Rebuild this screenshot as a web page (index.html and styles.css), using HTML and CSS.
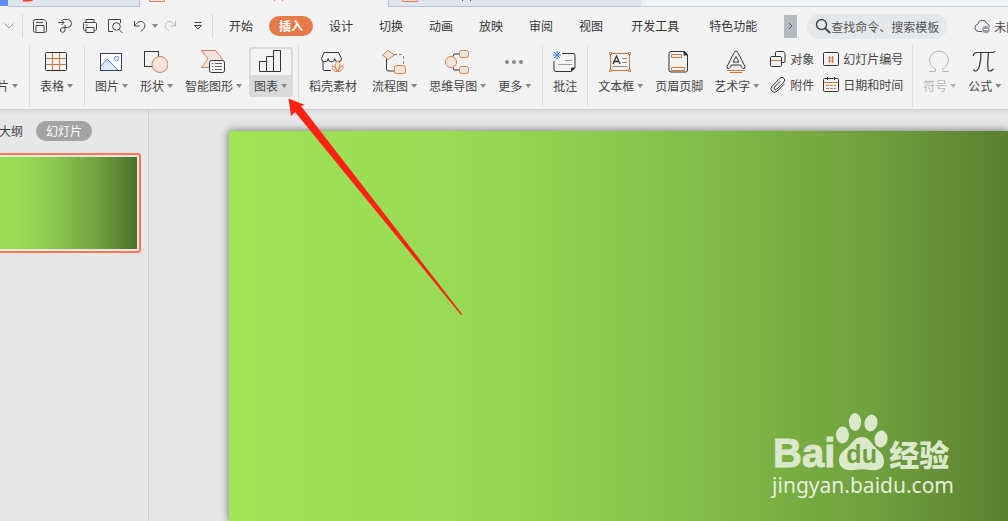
FILE: index.html
```html
<!DOCTYPE html>
<html lang="zh-CN">
<head>
    <meta charset="UTF-8">
    <meta name="viewport" content="width=device-width, initial-scale=1.0">
    <title>演示文稿 - 插入</title>
    <link rel="stylesheet" href="styles.css">
</head>
<body>
    <div class="app">
        <div class="doc-tabs">
            <div class="doc-home"></div>
            <div class="doc-tab">
                <svg width="12" height="6" viewBox="0 0 12 6"><path d="M1 0h10q0 1-4 1.500H1z" fill="#ff3c14"/></svg>
            </div>
            <div class="doc-tab active">
                <svg width="140" height="7" viewBox="0 0 140 7"><path d="M.5 0v1.500h15V0" fill="none" stroke="#f07846"/><path d="M125 0h1v1h-1zM133 0h1v1h-1z" fill="#f07846"/></svg>
            </div>
            <div class="doc-tab last">
                <svg width="140" height="7" viewBox="0 0 140 7"><path d="M.5 0v1.500h15V0" fill="none" stroke="#f07846"/><path d="M60 0h1v1h-1zM68 0h1v1h-1z" fill="#555"/></svg>
            </div>
            <div class="doc-rest"></div>
        </div>

        <div class="menu-bar">
            <div class="file-end">
                <svg width="10" height="6" viewBox="0 0 10 6"><path d="M.5.500l4.500 4.500L9.500.500" fill="none" stroke="#999"/></svg>
            </div>
            <div class="quick-bar">
                <button class="quick" aria-label="保存">
                    <svg width="16" height="16" viewBox="0 0 16 16"><path d="M3 1.500h9l2.500 2.500v8.500a2 2 0 0 1-2 2h-9a2 2 0 0 1-2-2v-9a2 2 0 0 1 2-2M4 4.500h7M4 14V7.500h8V14"/></svg>
                </button>
                <button class="quick" aria-label="输出为PDF">
                    <svg width="16" height="16" viewBox="0 0 16 16"><path d="M1 4.500h6M4.500 2l2.500 2.500L4.500 7M6 1.500h4.500a4 4 0 0 1 0 8H8M8 7v5a2.300 2.300 0 1 1-2.300-2.300H8"/></svg>
                </button>
                <button class="quick" aria-label="打印">
                    <svg width="16" height="16" viewBox="0 0 16 16"><path d="M4 4.500v-3h8v3M4 12.500H2.500a1 1 0 0 1-1-1v-6a1 1 0 0 1 1-1h11a1 1 0 0 1 1 1v6a1 1 0 0 1-1 1H12M4 9.500h8v5H4zM3.500 7h2"/></svg>
                </button>
                <button class="quick" aria-label="打印预览">
                    <svg width="16" height="16" viewBox="0 0 16 16"><path d="M6 13.500H1.500v-12h12V5"/><circle cx="9.500" cy="8.500" r="3.800"/><path d="M12 11.500l3.500 3.500"/></svg>
                </button>
                <button class="quick" aria-label="撤销">
                    <svg width="16" height="16" viewBox="0 0 16 16"><path d="M2.500 3v5h5M2.500 8C5 4 9 2 11.500 4.500s1.500 6-3 9"/></svg>
                </button>
                <span class="caret"></span>
                <button class="quick off" aria-label="恢复">
                    <svg width="16" height="16" viewBox="0 0 16 16"><path d="M13.500 3v5h-5M13.500 8C11 4 7 2 4.500 4.500s-1.500 6 2.500 8.500"/></svg>
                </button>
                <button class="quick more" aria-label="自定义快速访问">
                    <svg width="10" height="8" viewBox="0 0 10 8"><path d="M1.500.500h7M1.500 3.500L5 7l3.500-3.500z"/></svg>
                </button>
            </div>
            <nav class="tabs">
                <button class="tab">开始</button>
                <button class="tab active">插入</button>
                <button class="tab">设计</button>
                <button class="tab">切换</button>
                <button class="tab">动画</button>
                <button class="tab">放映</button>
                <button class="tab">审阅</button>
                <button class="tab">视图</button>
                <button class="tab wide">开发工具</button>
                <button class="tab wide">特色功能</button>
            </nav>
            <button class="tabs-next" aria-label="更多选项卡">
                <svg width="5" height="8" viewBox="0 0 5 8"><path d="M1 1l3 3-3 3" fill="none" stroke="#555"/></svg>
            </button>
            <label class="search">
                <svg width="16" height="16" viewBox="0 0 16 16"><circle cx="6.500" cy="6.500" r="5" fill="none" stroke="#444" stroke-width="1.400"/><path d="M10 10l5 5" stroke="#444" stroke-width="1.800"/></svg>
                <input type="text" placeholder="查找命令、搜索模板" aria-label="查找命令、搜索模板">
            </label>
            <button class="sync">
                <svg width="17" height="16" viewBox="0 0 17 16"><path d="M8 13.500H4.500a3.800 3.800 0 0 1-.500-7.500 4.500 4.500 0 0 1 8.800-.500 3.500 3.500 0 0 1 2.700 3" fill="none" stroke="#555"/><circle cx="12" cy="11.500" r="3.800" fill="#989eae"/><path d="M10 11.500h4" stroke="#fff"/></svg>
                <span>未同步</span>
            </button>
        </div>

        <div class="ribbon">
            <button class="tool">
                <span class="icon"></span>
                <span class="name">片<i class="caret"></i></span>
            </button>
            <span class="line"></span>
            <button class="tool">
                <svg class="icon" width="24" height="24" viewBox="0 0 24 24"><path d="M1.500 8.500h21M1.500 14.500h21M8.500 2.500v19M15.500 2.500v19" class="o"/><rect x="1.500" y="2.500" width="21" height="18" rx="1" class="k"/></svg>
                <span class="name">表格<i class="caret"></i></span>
            </button>
            <span class="line"></span>
            <button class="tool">
                <svg class="icon" width="24" height="24" viewBox="0 0 24 24"><rect x="1.500" y="3.500" width="21" height="17" fill="#fff" stroke="#34425f"/><path d="M2 16l6-7 11 11H2z" fill="#dfe8f7"/><path d="M2 16l6-7 11 11" fill="none" stroke="#4a83ea"/><circle cx="17.500" cy="8.500" r="2.200" fill="none" stroke="#4a83ea"/></svg>
                <span class="name">图片<i class="caret"></i></span>
            </button>
            <button class="tool">
                <svg class="icon" width="24" height="24" viewBox="0 0 24 24"><rect x=".500" y="1.500" width="14" height="15" class="k"/><circle cx="16" cy="14.500" r="8" class="f"/></svg>
                <span class="name">形状<i class="caret"></i></span>
            </button>
            <button class="tool">
                <svg class="icon" width="24" height="24" viewBox="0 0 24 24"><path d="M.500.500h14l7 8.500-7 8.500H.500L7 9z" class="f"/><rect x="8.500" y="10.500" width="15" height="12" rx="2" class="w"/><path d="M11 13.500h1.500M14 13.500h7M11 16.500h1.500M14 16.500h7M11 19.500h1.500M14 19.500h7" stroke="#666"/></svg>
                <span class="name">智能图形<i class="caret"></i></span>
            </button>
            <button class="tool selected">
                <svg class="icon" width="24" height="24" viewBox="0 0 24 24"><path d="M1.500 21.500v-10h7v10zM8.500 21.500v-15h7v15zM15.500 21.500V.500h7v21z" class="k"/></svg>
                <span class="name">图表<i class="caret"></i></span>
            </button>
            <span class="line"></span>
            <button class="tool store">
                <svg class="icon" width="24" height="24" viewBox="0 0 24 24"><path d="M11 20.500H4.500a1.500 1.500 0 0 1-1.500-1.500v-8M1.500 8.500L4 2.500h14.500l3 6M1.500 8.500a3.300 3.300 0 0 0 6.600 0 3.300 3.300 0 0 0 6.600 0 3.300 3.300 0 0 0 6.800 0" class="k"/><path d="M17.500 21.500c-3-4-3-7 0-11.500 3 4.500 3 7.500 0 11.500zM17 21.500c-4.500 0-5-3.500-5-6 3 1 4.500 3 5 6zM18 21.500c4.500 0 5-3.500 5-6-3 1-4.500 3-5 6z" class="f"/></svg>
                <span class="name">稻壳素材</span>
            </button>
            <button class="tool">
                <svg class="icon" width="24" height="24" viewBox="0 0 24 24"><path d="M4.500 9v10a2 2 0 0 0 2 2H12" class="k"/><path d="M12 4.500h8a1.500 1.500 0 0 1 1.500 1.500v9" fill="none" stroke="#888" stroke-dasharray="3 2"/><path d="M.500 5L6 .500 12.500 5 6 9.500z" class="f"/><rect x="12.500" y="15.500" width="11" height="8" rx="2" class="f"/></svg>
                <span class="name">流程图<i class="caret"></i></span>
            </button>
            <button class="tool">
                <svg class="icon" width="24" height="24" viewBox="0 0 24 24"><path d="M7 8l2-4h5M7 15l2 5h5" class="k"/><circle cx="6" cy="12" r="5.500" class="f"/><rect x="14.500" y=".500" width="9" height="7" rx="2" class="f"/><rect x="14.500" y="16.500" width="9" height="7" rx="2" class="f"/></svg>
                <span class="name">思维导图<i class="caret"></i></span>
            </button>
            <button class="tool">
                <svg class="icon" width="24" height="24" viewBox="0 0 24 24" fill="#888"><circle cx="5" cy="12" r="2"/><circle cx="12" cy="12" r="2"/><circle cx="19" cy="12" r="2"/></svg>
                <span class="name">更多<i class="caret"></i></span>
            </button>
            <span class="line"></span>
            <button class="tool">
                <svg class="icon" width="24" height="24" viewBox="0 0 24 24"><path d="M10 3.500h11a2 2 0 0 1 2 2V18l-4 3.500H4a2 2 0 0 1-2-2V11" class="k"/><path d="M23 17.500v1l-3.500 3H19v-3q0-1 1-1z" fill="#333"/><path d="M13 10.500h7M6 14.500h14" stroke="#999"/><path d="M5 1v8M1 5h8M2 2l6 6M8 2L2 8" stroke="#3f7fd6"/></svg>
                <span class="name">批注</span>
            </button>
            <span class="line"></span>
            <button class="tool">
                <svg class="icon" width="24" height="24" viewBox="0 0 24 24"><rect x="2.500" y="3.500" width="19" height="17" class="o"/><path d="M1.500 2.500h2v2h-2zM20.500 2.500h2v2h-2zM1.500 19.500h2v2h-2zM20.500 19.500h2v2h-2z" fill="#fff" stroke="#d3773e"/><path d="M5 14l3.500-8L12 14M6 11.500h5" fill="none" stroke="#333" stroke-width="1.300"/><path d="M14 8.500h5M14 12.500h5M5 16.500h14" stroke="#888"/></svg>
                <span class="name">文本框<i class="caret"></i></span>
            </button>
            <button class="tool">
                <svg class="icon" width="24" height="24" viewBox="0 0 24 24"><path d="M5 1.500h13.500l3 3V20a2 2 0 0 1-2 2H5a2 2 0 0 1-2-2V3.500a2 2 0 0 1 2-2z" class="k"/><path d="M17.500 1.500h1.500l2.500 3v1h-4z" fill="#333"/><path d="M5.500 4.500h10v3h-10zM5.500 17.500h13v3h-13z" class="o"/></svg>
                <span class="name">页眉页脚</span>
            </button>
            <button class="tool">
                <svg class="icon" width="24" height="24" viewBox="0 0 24 24"><path d="M10.500 2a1.700 1.700 0 0 1 3 0l7.500 14.500q.500 2-1 2-1.500 0-2-1L16.500 15h-9L6 17.500q-.500 1-2 1-1.500 0-1-2zM12 6.500l-3 5.500h6z" class="k"/><path d="M3 20.500h18M6 22.500h12" class="o"/></svg>
                <span class="name">艺术字<i class="caret"></i></span>
            </button>
            <div class="small-tools">
                <button class="small">
                    <svg width="16" height="16" viewBox="0 0 16 16"><path d="M5.500 5V1.500a1 1 0 0 1 1-1h7l1.500 2v8a1 1 0 0 1-1 1H12" class="k"/><rect x=".500" y="5.500" width="11" height="10" rx="1" class="k"/><path d="M1 9.500h10" class="o"/></svg>
                    对象
                </button>
                <button class="small">
                    <svg width="16" height="16" viewBox="0 0 16 16"><rect x=".500" y="1.500" width="15" height="13" rx="1" class="k"/><path d="M6.500 5v7M9.500 5v7M5 7h6M5 10h6" class="o"/></svg>
                    幻灯片编号
                </button>
                <button class="small">
                    <svg width="16" height="16" viewBox="0 0 16 16"><path d="M10.500 4L4.500 10a1.500 1.500 0 0 0 2.200 2.200L13.800 5A2.600 2.600 0 0 0 10 1.200L2 9.300a3.500 3.500 0 0 0 5 5l7.500-7.500" class="k"/></svg>
                    附件
                </button>
                <button class="small">
                    <svg width="16" height="16" viewBox="0 0 16 16"><rect x=".500" y="1.500" width="15" height="13" rx="1" class="k"/><path d="M4.500 0v3M11.500 0v3" class="k"/><path d="M1 5.500h14M3 8.500h3M7 8.500h3M11 8.500h2M3 11.500h3M7 11.500h3M11 11.500h2" class="o"/></svg>
                    日期和时间
                </button>
            </div>
            <span class="line"></span>
            <button class="tool" disabled>
                <svg class="icon" width="24" height="24" viewBox="0 0 24 24"><path d="M2 21.500h6.500v-2.500a9.300 9.300 0 1 1 7 0v2.500H22" fill="none" stroke="#b4b4b4"/></svg>
                <span class="name">符号<i class="caret"></i></span>
            </button>
            <button class="tool">
                <svg class="icon" width="24" height="24" viewBox="0 0 24 24"><path d="M1 6q1-3.500 4-3.500h14q2.500 0 4-1M9 2.500C9 12 7 21 3.500 21q-1.500 0-2-1.500M16.500 2.500Q15 18 16.500 20.500q2 1.500 5-1.500" fill="none" stroke="#333" stroke-width="1.200"/></svg>
                <span class="name">公式<i class="caret"></i></span>
            </button>
        </div>

        <div class="workspace">
            <aside class="side">
                <div class="side-tabs">
                    <button class="side-tab">大纲</button>
                    <button class="side-tab active">幻灯片</button>
                </div>
                <div class="thumb"><div class="thumb-slide"></div></div>
            </aside>
            <main class="stage">
                <div class="slide">
                    <div class="watermark">
                        <div class="brand">
                            <span class="bai">Bai</span>
                            <span class="paw">
                                <svg width="52" height="58" viewBox="0 0 52 58" fill="currentColor"><ellipse cx="6.500" cy="22" rx="6.500" ry="8.500"/><ellipse cx="19" cy="9" rx="6.200" ry="9"/><ellipse cx="35" cy="10" rx="6.500" ry="8.500" transform="rotate(12 35 10)"/><ellipse cx="45" cy="26" rx="6.500" ry="8.500" transform="rotate(8 45 26)"/><path d="M26 24c6 0 9 5 12 9 5 5 10 8 10 15 0 9-8 10-14 9-5-1-11-1-16 0-7 1-15-1-15-10 0-7 5-9 10-14 4-5 7-9 13-9z"/></svg>
                                <b class="du">du</b>
                            </span>
                            <span class="jingyan">经验</span>
                        </div>
                        <div class="site">jingyan.baidu.com</div>
                    </div>
                </div>
            </main>
        </div>

        <svg class="pointer" width="176" height="218" viewBox="0 0 176 218"><path d="M.500.500L17 7l-4 1 161 208-1 1L7 14l-4 4z" fill="#ff2214"/></svg>
    </div>
</body>
</html>
```

FILE: styles.css
```css
* {
    box-sizing: border-box;
    margin: 0;
    padding: 0;
}

body {
    font-family: "Noto Sans CJK SC", "Liberation Sans", sans-serif;
    font-size: 12px;
    color: #444;
    background-color: #e7e7e7;
}

button {
    font: inherit;
    color: inherit;
    background: none;
    border: none;
    white-space: nowrap;
    cursor: pointer;
}

svg {
    display: block;
    flex: none;
}

.app {
    position: relative;
    display: flex;
    flex-direction: column;
    height: 100vh;
    overflow: hidden;
}

/* document tabs */
.doc-tabs {
    display: flex;
    flex: none;
    height: 7px;
    background-color: #f3f3f3;
}

.doc-home {
    width: 8px;
    height: 6px;
    background-color: #5b8cf5;
}

.doc-tab {
    width: 132px;
    padding-left: 14px;
    background-color: #e1e5ee;
    border-right: 1px solid #b9c3d8;
    border-bottom: 1px solid #b9c3d8;
}

.doc-tab.active {
    width: 249px;
    padding-left: 9px;
    background-color: #f3f3f3;
    border-bottom: none;
}

.doc-tab.last {
    width: 253px;
    padding-left: 13px;
    border-right: none;
}

.doc-rest {
    flex: 1;
    background-color: #f1f3f8;
    border-bottom: 1px solid #c6cfe0;
}

/* menu */
.menu-bar {
    display: flex;
    flex: none;
    align-items: center;
    height: 38px;
    background-color: #f3f3f3;
}

.file-end {
    display: flex;
    flex: none;
    align-items: center;
    width: 23px;
    height: 24px;
    padding-left: 4px;
    border-right: 1px solid #d9d9d9;
}

.quick-bar {
    display: flex;
    flex: none;
    align-items: center;
    width: 190px;
    height: 24px;
    padding-left: 9px;
    gap: 9px;
    border-right: 1px solid #d9d9d9;
}

.quick svg {
    fill: none;
    stroke: #444;
}

.quick.off svg {
    stroke: #bbb;
}

.quick-bar .caret {
    margin: 0 -5px;
}

.quick.more {
    margin-left: 6px;
}

.caret {
    display: inline-block;
    flex: none;
    width: 6px;
    height: 4px;
    background-color: #888;
    clip-path: polygon(0 0, 100% 0, 50% 100%);
}

.tabs {
    display: flex;
    flex: none;
    gap: 6px;
    padding-left: 6px;
}

.tab {
    height: 20px;
    padding: 0 10px;
    border-radius: 10px;
    line-height: 20px;
    color: #333;
}

.tab.wide {
    padding: 0 12px;
}

.tab.active {
    background-color: #e67a4a;
    color: #fff;
    font-weight: bold;
}

.tabs-next {
    display: flex;
    flex: none;
    align-items: center;
    justify-content: center;
    width: 13px;
    height: 23px;
    margin-left: 15px;
    background-color: #b5b9c2;
}

.search {
    display: flex;
    flex: none;
    align-items: center;
    width: 140px;
    height: 25px;
    margin-left: 10px;
    padding-left: 8px;
    border-radius: 13px;
    background-color: #e5e8ea;
}

.search input {
    width: 112px;
    border: none;
    outline: none;
    background: none;
    font: inherit;
}

.search input::placeholder {
    color: #555;
    opacity: 1;
}

.sync {
    display: flex;
    flex: none;
    align-items: center;
    gap: 3px;
    margin-left: 27px;
}

/* ribbon */
.ribbon {
    display: flex;
    flex: none;
    align-items: flex-start;
    gap: 1px;
    height: 65px;
    margin-left: -8px;
    padding-top: 2px;
    background-color: #f3f3f3;
    border-bottom: 1px solid #cfcfcf;
}

.tool {
    display: flex;
    flex: none;
    flex-direction: column;
    align-items: center;
    height: 50px;
    padding: 3px 5px 0;
}

.tool .icon {
    height: 24px;
    margin: 0 1px 0 -1px;
}

.tool .name {
    display: flex;
    align-items: center;
    gap: 3px;
    margin-top: 2px;
    line-height: 20px;
}

.tool .caret {
    margin-right: 1px;
}

.tool:disabled {
    color: #b4b4b4;
}

.tool:disabled .caret {
    background-color: #b4b4b4;
}

.tool.selected {
    border-radius: 4px;
    background: linear-gradient(#f3f3f3 28px, #dadada 28px);
    box-shadow: inset 0 0 0 2px #dadada;
}

.tool.store {
    margin-right: 4px;
}

.line {
    flex: none;
    width: 1px;
    height: 62px;
    margin: -2px 4px 0;
    background-color: #dedede;
}

.small-tools {
    display: grid;
    grid-template-columns: auto auto;
    gap: 6px 9px;
    padding: 2px 4px 0;
}

.small {
    display: flex;
    align-items: center;
    gap: 4px;
    height: 20px;
    line-height: 20px;
}

.k {
    fill: none;
    stroke: #333;
}

.w {
    fill: #f7f7f7;
    stroke: #333;
}

.o {
    fill: none;
    stroke: #d3773e;
}

.f {
    fill: #f3e4dc;
    stroke: #d08252;
}

/* work area */
.workspace {
    display: flex;
    flex: 1;
    min-height: 0;
    background: linear-gradient(#dcdcdc, #e7e7e7 5px);
}

.side {
    flex: none;
    width: 149px;
    padding-top: 11px;
    border-right: 1px solid #d0d0d0;
}

.side-tabs {
    display: flex;
    gap: 13px;
    margin-left: -1px;
}

.side-tab {
    height: 20px;
    line-height: 20px;
}

.side-tab.active {
    padding: 0 10px;
    border-radius: 10px;
    background-color: #a3a3a3;
    color: #fff;
}

.thumb {
    width: 169px;
    height: 100px;
    margin: 12px 0 0 -28px;
    padding: 2px;
    border: 2px solid #f97850;
    border-radius: 3px;
}

.thumb-slide {
    height: 92px;
    background: linear-gradient(90deg, #a0e457, #98da54 28%, #8ac64c 50%, #70a03e 76%, #4c712a);
}

.stage {
    display: flex;
    flex: 1;
    padding: 21px 0 0 80px;
}

.slide {
    display: flex;
    flex: 1;
    align-items: flex-end;
    justify-content: flex-end;
    padding: 0 54px 22px 0;
    background: linear-gradient(90deg, #a0e457, #98db54 28%, #8bc94d 50%, #80b746 64%, #70a13e 82%, #5a7f30);
    box-shadow: 0 0 8px 1px rgba(0, 0, 0, 0.45);
}

/* watermark */
.watermark {
    color: #dbe8cc;
}

.brand {
    display: flex;
    align-items: flex-end;
    gap: 1px;
    height: 58px;
    padding-left: 1px;
}

.bai {
    font: bold 40px/36px "Liberation Sans", sans-serif;
    -webkit-text-stroke: 1px #dbe8cc;
}

.paw {
    position: relative;
}

.du {
    position: absolute;
    left: 10px;
    bottom: 4px;
    font: bold 25px/25px "Liberation Sans", sans-serif;
    color: #70a03c;
}

.jingyan {
    font-size: 30px;
    font-weight: 900;
    line-height: 36px;
}

.site {
    font: 21px/28px "Noto Sans", sans-serif;
    color: #e6efdb;
}

/* red arrow over the page */
.pointer {
    position: absolute;
    left: 288px;
    top: 98px;
    pointer-events: none;
}
```
